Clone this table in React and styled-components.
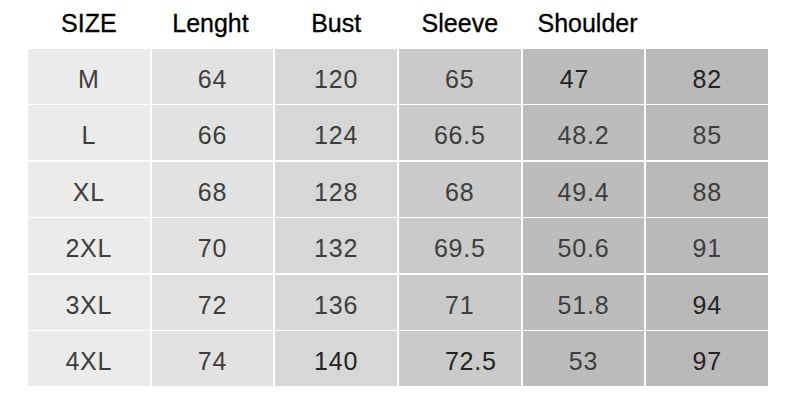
import React from "react";
import styled, { createGlobalStyle } from "styled-components";

const GlobalStyle = createGlobalStyle`
  html, body {
    margin: 0;
    padding: 0;
    background: #ffffff;
  }
`;

const Page = styled.div`
  width: 790px;
  height: 400px;
  box-sizing: border-box;
  padding: 0 22px 0 28px;
  background: #ffffff;
  font-family: "Liberation Sans", Arial, sans-serif;
`;

const Header = styled.div`
  display: grid;
  grid-template-columns: repeat(6, 1fr);
  column-gap: 2px;
  height: 49px;
`;

const HeadCell = styled.div`
  display: flex;
  align-items: center;
  justify-content: center;
  padding-bottom: 2px;
  padding-left: ${(p) => (p.$dx > 0 ? p.$dx * 2 : 0)}px;
  padding-right: ${(p) => (p.$dx < 0 ? -p.$dx * 2 : 0)}px;
  font-size: 25px;
  color: #000;
  -webkit-text-stroke: 0.3px #000;
`;

const Table = styled.div`
  display: grid;
  grid-template-columns: repeat(6, 1fr);
  grid-auto-rows: 1fr;
  gap: 1.5px 2px;
  height: 337px;
`;

const Cell = styled.div`
  display: flex;
  align-items: center;
  justify-content: center;
  padding-top: 6px;
  padding-left: ${(p) => (p.$dx > 0 ? p.$dx * 2 : 0)}px;
  padding-right: ${(p) => (p.$dx < 0 ? -p.$dx * 2 : 0)}px;
  box-sizing: border-box;
  background: ${(p) => p.$bg};
  font-size: 25px;
  letter-spacing: 0.8px;
  color: ${(p) => (p.$dark ? "#232323" : "#3e3e3e")};
`;

const shades = ["#ebebeb", "#e2e2e2", "#d7d7d7", "#cacaca", "#bcbcbc", "#b9b9b9"];

const headers = [
  { label: "SIZE" },
  { label: "Lenght", dx: -2 },
  { label: "Bust" },
  { label: "Sleeve" },
  { label: "Shoulder", dx: 4 },
  { label: "" },
];

const rows = [
  ["M", "64", "120", "65", { v: "47", dx: -9, dark: true }, { v: "82", dark: true }],
  ["L", "66", "124", "66.5", "48.2", "85"],
  ["XL", "68", "128", "68", "49.4", "88"],
  ["2XL", "70", "132", "69.5", "50.6", "91"],
  ["3XL", "72", "136", "71", "51.8", { v: "94", dark: true }],
  ["4XL", "74", { v: "140", dark: true }, { v: "72.5", dx: 11, dark: true }, "53", { v: "97", dark: true }],
];

const App = () => {
  return (
    <>
      <GlobalStyle />
      <Page>
        <Header>
          {headers.map((h, i) => (
            <HeadCell key={i} $dx={h.dx || 0}>
              {h.label}
            </HeadCell>
          ))}
        </Header>
        <Table>
          {rows.map((row, r) =>
            row.map((item, c) => {
              const cell = typeof item === "string" ? { v: item } : item;
              return (
                <Cell key={`${r}-${c}`} $bg={shades[c]} $dx={cell.dx || 0} $dark={cell.dark}>
                  {cell.v}
                </Cell>
              );
            })
          )}
        </Table>
      </Page>
    </>
  );
};

export default App;
